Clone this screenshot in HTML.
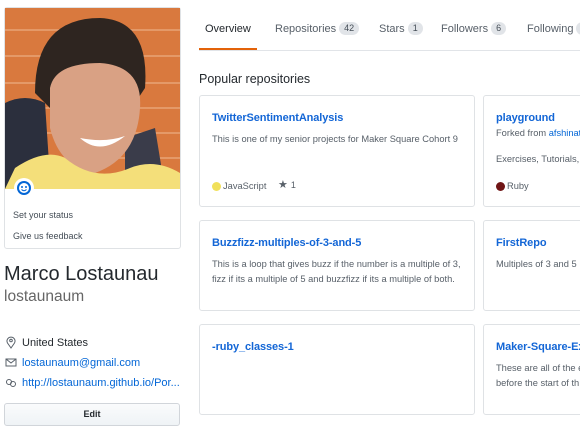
<!DOCTYPE html>
<html><head><meta charset="utf-8"><style>
*{box-sizing:border-box;margin:0;padding:0}
body{width:580px;height:430px;overflow:hidden;background:#fff;font-family:"Liberation Sans",sans-serif;color:#24292e;position:relative}
.abs{position:absolute}
.card{position:absolute;border:1px solid #dfe2e5;border-radius:3px;background:#fff}
.rn{position:absolute;left:12px;top:16px;font-size:11px;font-weight:bold;color:#1366d6;white-space:nowrap;letter-spacing:-.1px}
.rd{position:absolute;left:12px;font-size:9.3px;color:#586069;line-height:15px;white-space:nowrap}
.tab{position:absolute;top:22px;font-size:11px;color:#586069;white-space:nowrap;line-height:14px}
.cnt{display:inline-block;background:#e1e4e8;color:#444d56;border-radius:8px;font-size:9px;padding:0 5px;margin-left:3px;line-height:13px;vertical-align:top}
.info{position:absolute;left:22px;font-size:11px;white-space:nowrap}
</style></head><body>
<div class="card" style="left:4px;top:7px;width:177px;height:242px"></div>
<svg class="abs" style="left:5px;top:8px" width="175" height="181" viewBox="0 0 175 181">
<rect width="175" height="181" fill="#d9793e"/>
<g stroke="#e9a77a" stroke-width="2" opacity=".7">
<line x1="0" y1="22" x2="175" y2="22"/><line x1="0" y1="48" x2="175" y2="48"/><line x1="0" y1="75" x2="175" y2="75"/><line x1="0" y1="100" x2="175" y2="100"/><line x1="0" y1="125" x2="175" y2="125"/><line x1="0" y1="150" x2="175" y2="150"/></g>
<path d="M0 95 Q20 85 40 95 L45 170 L0 181Z" fill="#2b2f3d"/>
<path d="M120 130 L150 120 L160 181 L120 181Z" fill="#3a3c4a"/>
<path d="M30 85 Q30 10 95 10 Q145 12 140 80 L130 95 Q110 45 60 70 L45 100Z" fill="#2e2520"/>
<path d="M45 80 Q50 55 95 55 Q138 58 135 100 Q132 150 90 165 Q55 160 45 120Z" fill="#d9a184"/>
<path d="M75 130 Q95 148 120 128 Q100 135 75 130Z" fill="#fff"/>
<path d="M0 181 L10 160 Q40 140 60 150 Q90 175 125 160 Q150 150 175 165 L175 181Z" fill="#f4df7a"/>
</svg>
<svg class="abs" style="left:14px;top:178px" width="20" height="20"><circle cx="10" cy="10" r="10" fill="#fff"/><circle cx="10" cy="10" r="7" fill="#0366d6"/><circle cx="10" cy="10" r="5" fill="#fff"/><circle cx="8" cy="9" r="1" fill="#0366d6"/><circle cx="12" cy="9" r="1" fill="#0366d6"/><path d="M7.5 11.5 Q10 14 12.5 11.5" stroke="#0366d6" fill="none"/></svg>
<div class="abs" style="left:13px;top:210px;font-size:9px;color:#444d56">Set your status</div>
<div class="abs" style="left:13px;top:231px;font-size:9px;color:#444d56">Give us feedback</div>
<div class="abs" style="left:4px;top:263px;font-size:20px;color:#24292e">Marco Lostaunau</div>
<div class="abs" style="left:4px;top:288px;font-size:15.5px;color:#666">lostaunaum</div>
<svg class="abs" style="left:5px;top:336px" width="12" height="60" fill="none" stroke="#586069" stroke-width="1">
<path d="M6 12 L2.5 7 A4 4 0 1 1 9.5 7Z"/><circle cx="6" cy="4.5" r="1.3"/>
<rect x="1" y="23" width="10" height="7"/><path d="M1 23 L6 27 L11 23"/>
<circle cx="4" cy="46" r="2.5"/><circle cx="8" cy="48" r="2.5"/></svg>
<div class="info" style="top:337px;color:#24292e">United States</div>
<div class="info" style="top:357px;color:#0366d6">lostaunaum@gmail.com</div>
<div class="info" style="top:377px;color:#0366d6">http://lostaunaum.github.io/Por...</div>
<div class="abs" style="left:4px;top:403px;width:176px;height:23px;border:1px solid #d1d5da;border-radius:3px;background:linear-gradient(#fafbfc,#eff3f6);font-size:9px;font-weight:bold;text-align:center;line-height:21px">Edit</div>

<div class="tab" style="left:205px;color:#24292e">Overview</div>
<div class="abs" style="left:199px;top:48px;width:58px;height:2px;background:#e36209"></div>
<div class="abs" style="left:199px;top:50px;width:381px;height:1px;background:#e1e4e8"></div>
<div class="tab" style="left:275px">Repositories<span class="cnt">42</span></div>
<div class="tab" style="left:379px">Stars<span class="cnt">1</span></div>
<div class="tab" style="left:441px">Followers<span class="cnt">6</span></div>
<div class="tab" style="left:527px">Following<span class="cnt">3</span></div>
<div class="abs" style="left:199px;top:72px;font-size:12.5px;color:#24292e">Popular repositories</div>

<div class="card" style="left:199px;top:95px;width:276px;height:112px">
<div class="rn">TwitterSentimentAnalysis</div>
<div class="rd" style="top:36px">This is one of my senior projects for Maker Square Cohort 9</div>
<div class="abs" style="left:12px;top:86px;width:9px;height:9px;border-radius:50%;background:#f1e05a"></div>
<div class="rd" style="left:23px;top:83px">JavaScript</div>
<div class="rd" style="left:78px;top:82px;font-size:11px">★ <span style="font-size:9px">1</span></div>
</div>
<div class="card" style="left:483px;top:95px;width:120px;height:112px">
<div class="rn">playground</div>
<div class="rd" style="top:30px">Forked from <span style="color:#0366d6">afshinator</span></div>
<div class="rd" style="top:56px">Exercises, Tutorials, S</div>
<div class="abs" style="left:12px;top:86px;width:9px;height:9px;border-radius:50%;background:#701516"></div>
<div class="rd" style="left:23px;top:83px">Ruby</div>
</div>
<div class="card" style="left:199px;top:220px;width:276px;height:91px">
<div class="rn">Buzzfizz-multiples-of-3-and-5</div>
<div class="rd" style="top:36px">This is a loop that gives buzz if the number is a multiple of 3,<br>fizz if its a multiple of 5 and buzzfizz if its a multiple of both.</div>
</div>
<div class="card" style="left:483px;top:220px;width:120px;height:91px">
<div class="rn">FirstRepo</div>
<div class="rd" style="top:36px">Multiples of 3 and 5 I</div>
</div>
<div class="card" style="left:199px;top:324px;width:276px;height:91px">
<div class="rn">-ruby_classes-1</div>
</div>
<div class="card" style="left:483px;top:324px;width:120px;height:91px">
<div class="rn">Maker-Square-Exe</div>
<div class="rd" style="top:36px">These are all of the e<br>before the start of th</div>
</div>
</body></html>
